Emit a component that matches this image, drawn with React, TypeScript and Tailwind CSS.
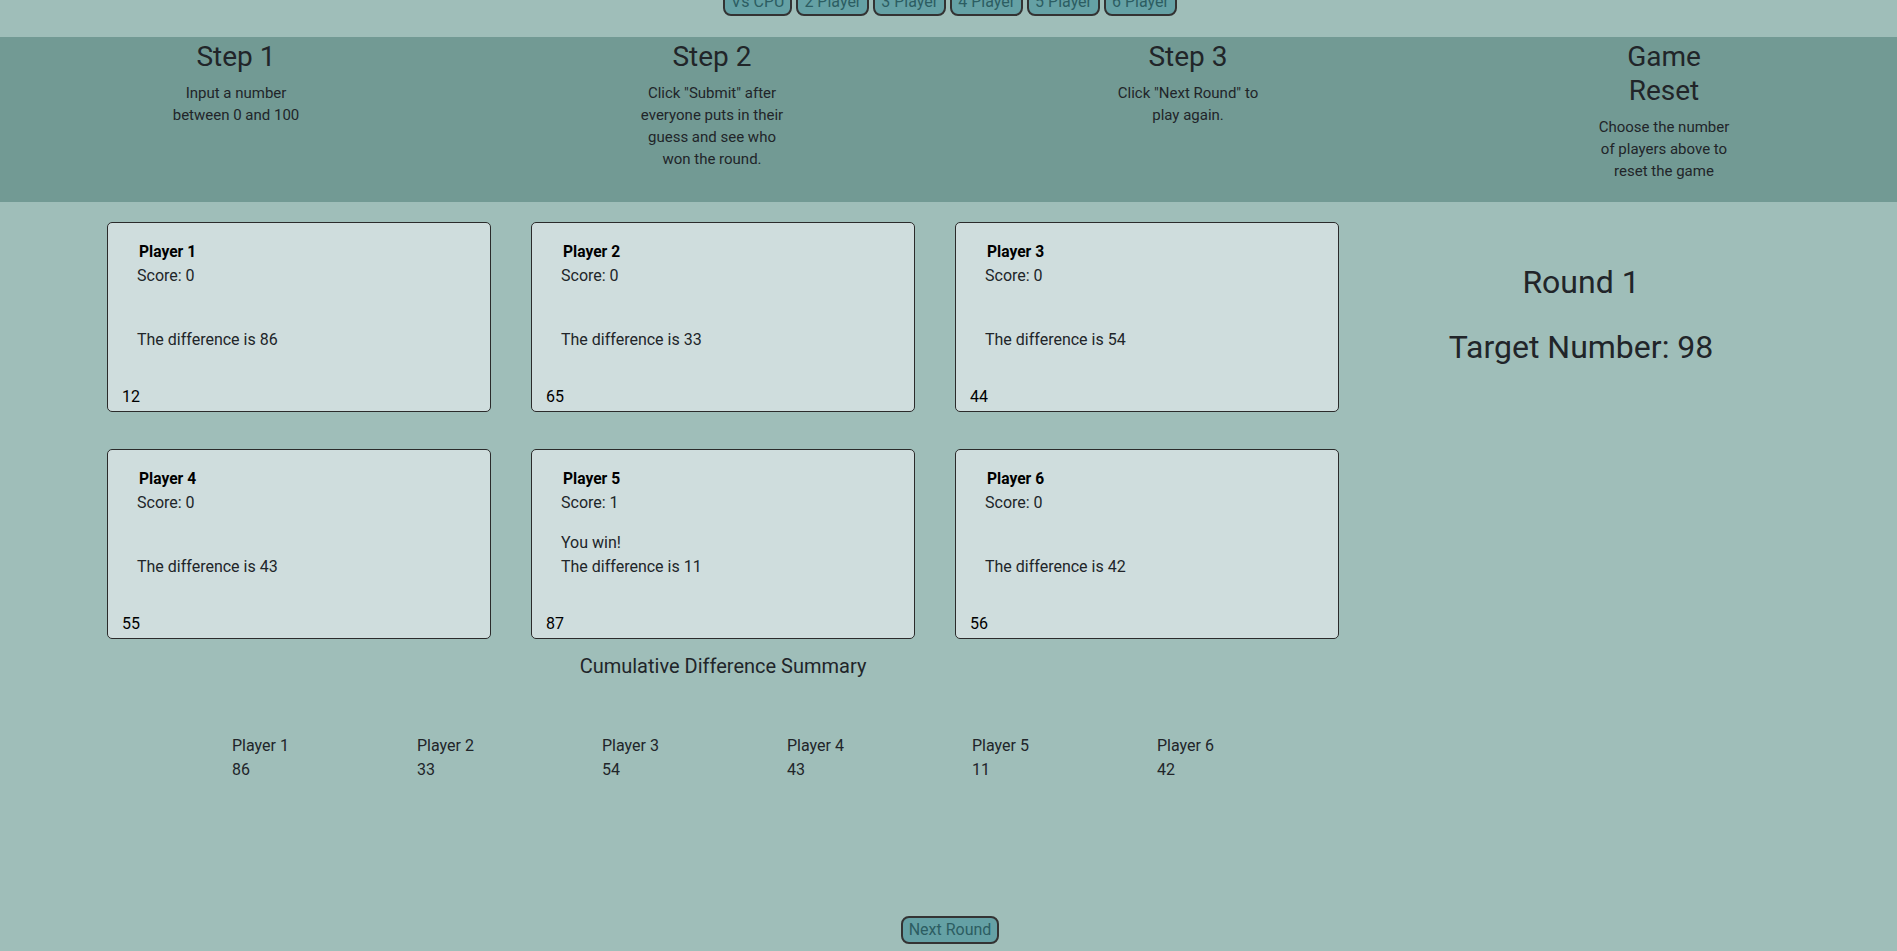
const MODES = ['Vs CPU', '2 Player', '3 Player', '4 Player', '5 Player', '6 Player'];

const STEPS: { title: string[]; lines: string[] }[] = [
  { title: ['Step 1'], lines: ['Input a number', 'between 0 and 100'] },
  {
    title: ['Step 2'],
    lines: ['Click "Submit" after', 'everyone puts in their', 'guess and see who', 'won the round.'],
  },
  { title: ['Step 3'], lines: ['Click "Next Round" to', 'play again.'] },
  { title: ['Game', 'Reset'], lines: ['Choose the number', 'of players above to', 'reset the game'] },
];

interface Player {
  name: string;
  score: number;
  guess: number;
  diff: number;
  won?: boolean;
}

const PLAYERS: Player[] = [
  { name: 'Player 1', score: 0, guess: 12, diff: 86 },
  { name: 'Player 2', score: 0, guess: 65, diff: 33 },
  { name: 'Player 3', score: 0, guess: 44, diff: 54 },
  { name: 'Player 4', score: 0, guess: 55, diff: 43 },
  { name: 'Player 5', score: 1, guess: 87, diff: 11, won: true },
  { name: 'Player 6', score: 0, guess: 56, diff: 42 },
];

function GameButton({ label }: { label: string }) {
  return (
    <button
      type="button"
      className="rounded-[8px] border-2 border-[#333] bg-[#65a1a5] px-[6px] text-[16px] leading-[24px] text-[#2c5d62]"
    >
      {label}
    </button>
  );
}

function PlayerCard({ player }: { player: Player }) {
  return (
    <div className="flex h-[190px] flex-col rounded-[5px] border border-[#2b2b2b] bg-[#cfdddd]">
      <div className="pl-[29px] pt-[17px]">
        <div className="pl-[2px] text-[15.6px] font-bold leading-[24px] text-black">{player.name}</div>
        <div className="text-[16px] leading-[24px]">Score: {player.score}</div>
        <div className="mt-[16px] h-[24px] text-[16px] leading-[24px]">{player.won ? 'You win!' : ''}</div>
        <div className="text-[16px] leading-[24px]">The difference is {player.diff}</div>
      </div>
      <input
        defaultValue={String(player.guess)}
        className="mb-[2px] ml-[14px] mt-auto h-[24px] w-[120px] border-0 bg-transparent p-0 text-[16px] leading-[24px] text-black outline-none"
      />
    </div>
  );
}

export default function App() {
  return (
    <div className="min-h-[951px] overflow-hidden bg-[#9fbeb9] font-[Roboto,sans-serif] text-[#212529]">
      <div className="-mt-[12px] flex justify-center gap-[4px] pl-[3px]">
        {MODES.map((m) => (
          <GameButton key={m} label={m} />
        ))}
      </div>

      <div className="mt-[21px] h-[165px] bg-[#729a94] pt-[3px]">
        <div className="-ml-[2px] grid grid-cols-[476px_476px_476px_476px]">
          {STEPS.map((s) => (
            <div key={s.title.join(' ')} className="flex flex-col items-center text-center">
              <h2 className="text-[28px] leading-[1.2]">
                {s.title.map((t) => (
                  <div key={t}>{t}</div>
                ))}
              </h2>
              <p className="mt-[8.7px] text-[15px] leading-[22px]">
                {s.lines.map((l) => (
                  <span key={l} className="block whitespace-nowrap">
                    {l}
                  </span>
                ))}
              </p>
            </div>
          ))}
        </div>
      </div>

      <div className="mt-[20px] flex">
        <div className="w-[1265px] shrink-0 pl-[107px]">
          <div className="grid w-max grid-cols-[384px_384px_384px] gap-x-[40px] gap-y-[37px]">
            {PLAYERS.map((p) => (
              <PlayerCard key={p.name} player={p} />
            ))}
          </div>
          <h3 className="mt-[15px] w-[1232px] text-center text-[20px] leading-[24px]">
            Cumulative Difference Summary
          </h3>
          <div className="ml-[125px] mt-[56px] grid w-max grid-cols-[185px_185px_185px_185px_185px_185px] text-[16px] leading-[24px]">
            {PLAYERS.map((p) => (
              <div key={p.name}>
                <div>{p.name}</div>
                <div>{p.diff}</div>
              </div>
            ))}
          </div>
        </div>
        <div className="flex-1 pt-[41px] text-center text-[32px] leading-[38.4px]">
          <div>Round 1</div>
          <div className="mt-[26.2px]">Target Number: 98</div>
        </div>
      </div>

      <div className="mt-[134px] flex justify-center pl-[3px]">
        <GameButton label="Next Round" />
      </div>
    </div>
  );
}
